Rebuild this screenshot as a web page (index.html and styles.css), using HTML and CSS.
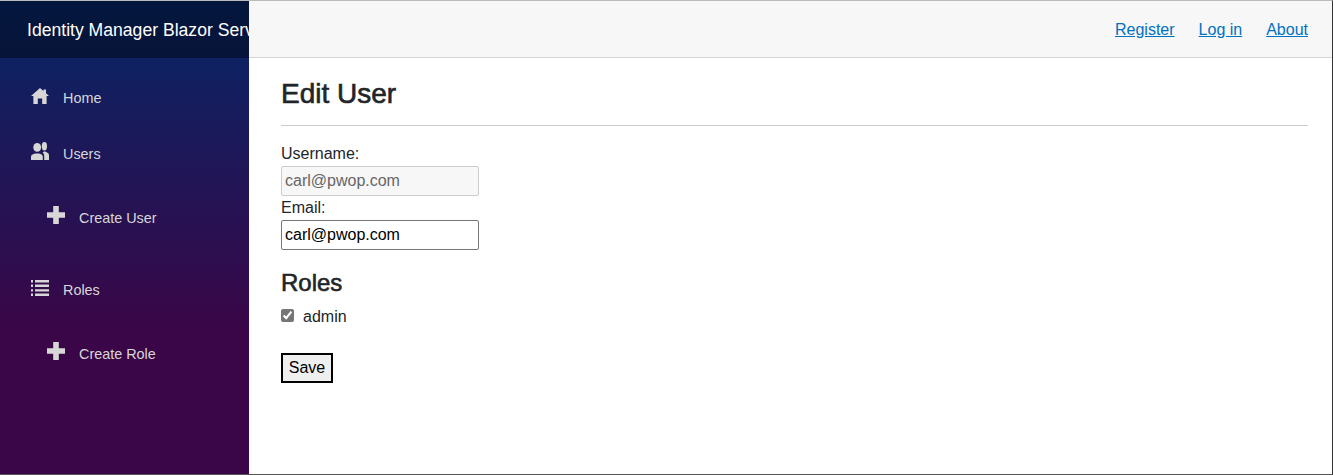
FILE: index.html
```html
<!DOCTYPE html>
<html lang="en">
<head>
    <meta charset="UTF-8">
    <title>Identity Manager Blazor Server</title>
    <link rel="stylesheet" href="styles.css">
</head>
<body>
    <div class="page">
        <div class="sidebar">
            <div class="brand-row">
                <a class="brand" href="#">Identity Manager Blazor Server</a>
            </div>
            <nav class="nav-list">
                <a class="nav-link home-link" href="#">
                    <svg class="nav-icon" viewBox="0 0 18 18"><path d="M9 0 L12.5 3 V1.5 H15 V5.2 L18 8 H15.6 V16 H11.2 V10.5 H6.8 V16 H2.4 V8 H0 Z"/></svg>
                    Home
                </a>
                <a class="nav-link" href="#">
                    <svg class="nav-icon raised" viewBox="0 0 18 18"><ellipse cx="6.2" cy="5.4" rx="3.9" ry="4.4"/><ellipse cx="13.4" cy="4.2" rx="2.6" ry="4.2"/><path d="M0 18 V14.6 Q0 12.6 2.6 12 L4.4 11.4 H8 L9.6 12 Q11.8 12.6 11.8 14.6 V18 Z"/><path d="M13.2 18 V13.4 Q13.2 11.4 11.6 10.4 L13 9.4 H14.2 L16 10.4 Q18 11 18 13 V18 Z"/></svg>
                    Users
                </a>
                <a class="nav-link sub-link" href="#">
                    <svg class="nav-icon raised" viewBox="0 0 18 18"><path d="M6.2 0 H11.8 V6.2 H18 V11.8 H11.8 V18 H6.2 V11.8 H0 V6.2 H6.2 Z"/></svg>
                    Create User
                </a>
                <a class="nav-link roles-link" href="#">
                    <svg class="nav-icon" viewBox="0 0 18 18"><path d="M0 0 H2 V2.4 H0 Z M4 0 H18 V2.4 H4 Z M0 4.6 H2 V7 H0 Z M4 4.6 H18 V7 H4 Z M0 9.2 H2 V11.6 H0 Z M4 9.2 H18 V11.6 H4 Z M0 13.6 H2 V16 H0 Z M4 13.6 H18 V16 H4 Z"/></svg>
                    Roles
                </a>
                <a class="nav-link sub-link" href="#">
                    <svg class="nav-icon raised" viewBox="0 0 18 18"><path d="M6.2 0 H11.8 V6.2 H18 V11.8 H11.8 V18 H6.2 V11.8 H0 V6.2 H6.2 Z"/></svg>
                    Create Role
                </a>
            </nav>
        </div>
        <div class="main">
            <div class="top-row">
                <a href="#">Register</a>
                <a href="#">Log in</a>
                <a href="#">About</a>
            </div>
            <div class="content">
                <h1>Edit User</h1>
                <hr>
                <form>
                    <label for="username">Username:</label>
                    <input class="field" type="text" id="username" value="carl@pwop.com" disabled>
                    <label for="email">Email:</label>
                    <input class="field" type="text" id="email" value="carl@pwop.com">
                    <h3>Roles</h3>
                    <div class="role-row">
                        <input type="checkbox" id="admin" checked>
                        <label for="admin">admin</label>
                    </div>
                    <button class="save" type="button">Save</button>
                </form>
            </div>
        </div>
    </div>
</body>
</html>
```

FILE: styles.css
```css
html, body {
    height: 100%;
}

body {
    font-family: "Liberation Sans", Arial, sans-serif;
    font-size: 16px;
    line-height: 1.5;
    color: #212529;
    margin: 0;
    padding: 0;
    background-color: #fff;
    overflow: hidden;
}

.page {
    display: flex;
    height: 475px;
    box-sizing: border-box;
    border-top: 1px solid #bbb;
    border-right: 1px solid #333;
    border-bottom: 1px solid #555;
}

.sidebar {
    width: 249px;
    flex-shrink: 0;
    overflow: hidden;
    background-image: linear-gradient(180deg, rgb(5, 39, 103) 0%, #3a0647 70%);
}

.brand-row {
    height: 57px;
    box-sizing: border-box;
    display: flex;
    align-items: center;
    padding-left: 27px;
    padding-top: 2px;
    background-color: rgba(0, 0, 0, 0.4);
}

.brand {
    color: #fff;
    font-size: 17.6px;
    text-decoration: none;
    white-space: nowrap;
}

.nav-list {
    display: flex;
    flex-direction: column;
}

.nav-link {
    display: flex;
    align-items: center;
    height: 24px;
    margin-top: 32px;
    padding-left: 31px;
    color: #d7d7d7;
    font-size: 14.4px;
    text-decoration: none;
}

.home-link {
    margin-top: 29px;
}

.sub-link {
    padding-left: 47px;
    margin-top: 40px;
}

.roles-link {
    margin-top: 48px;
}

.nav-icon {
    width: 18px;
    height: 18px;
    margin-right: 14px;
    margin-top: -4px;
    fill: #d7d7d7;
}

.nav-icon.raised {
    margin-top: -8px;
}

.main {
    flex: 1;
    min-width: 0;
}

.top-row {
    height: 57px;
    box-sizing: border-box;
    display: flex;
    align-items: center;
    justify-content: flex-end;
    gap: 24px;
    padding-right: 24px;
    padding-top: 2px;
    background-color: #f7f7f7;
    border-bottom: 1px solid #d6d5d5;
}

.top-row a {
    color: #0071c1;
}

.content {
    padding: 13px 24px 0 32px;
}

h1 {
    font-size: 28px;
    font-weight: 500;
    line-height: 1.2;
    margin: 6px 0 0;
    -webkit-text-stroke: 0.6px #212529;
}

hr {
    border: 0;
    border-top: 1px solid #ccc;
    margin: 14px 0 16px;
}

form label {
    display: block;
    line-height: 24px;
}

.field {
    display: block;
    box-sizing: border-box;
    width: 198px;
    height: 30px;
    padding: 1px 3px;
    font-family: "Liberation Sans", Arial, sans-serif;
    font-size: 16px;
    border: 1px solid #767676;
    border-radius: 2px;
    color: #000;
    background-color: #fff;
}

.field:disabled {
    background-color: #f7f7f7;
    border-color: #ccc;
    color: #666;
}

h3 {
    font-size: 24px;
    font-weight: 500;
    line-height: 1.2;
    margin: 19px 0 8px;
    -webkit-text-stroke: 0.6px #212529;
}

.role-row {
    display: flex;
    align-items: center;
    height: 24px;
}

.role-row input {
    margin: 0 9px 4px 0;
    width: 13px;
    height: 13px;
    accent-color: #767676;
}

.save {
    display: block;
    margin-top: 24px;
    height: 30px;
    width: 52px;
    padding: 0;
    font-family: "Liberation Sans", Arial, sans-serif;
    font-size: 16px;
    color: #000;
    background-color: #efefef;
    border: 2px solid #000;
}
```
